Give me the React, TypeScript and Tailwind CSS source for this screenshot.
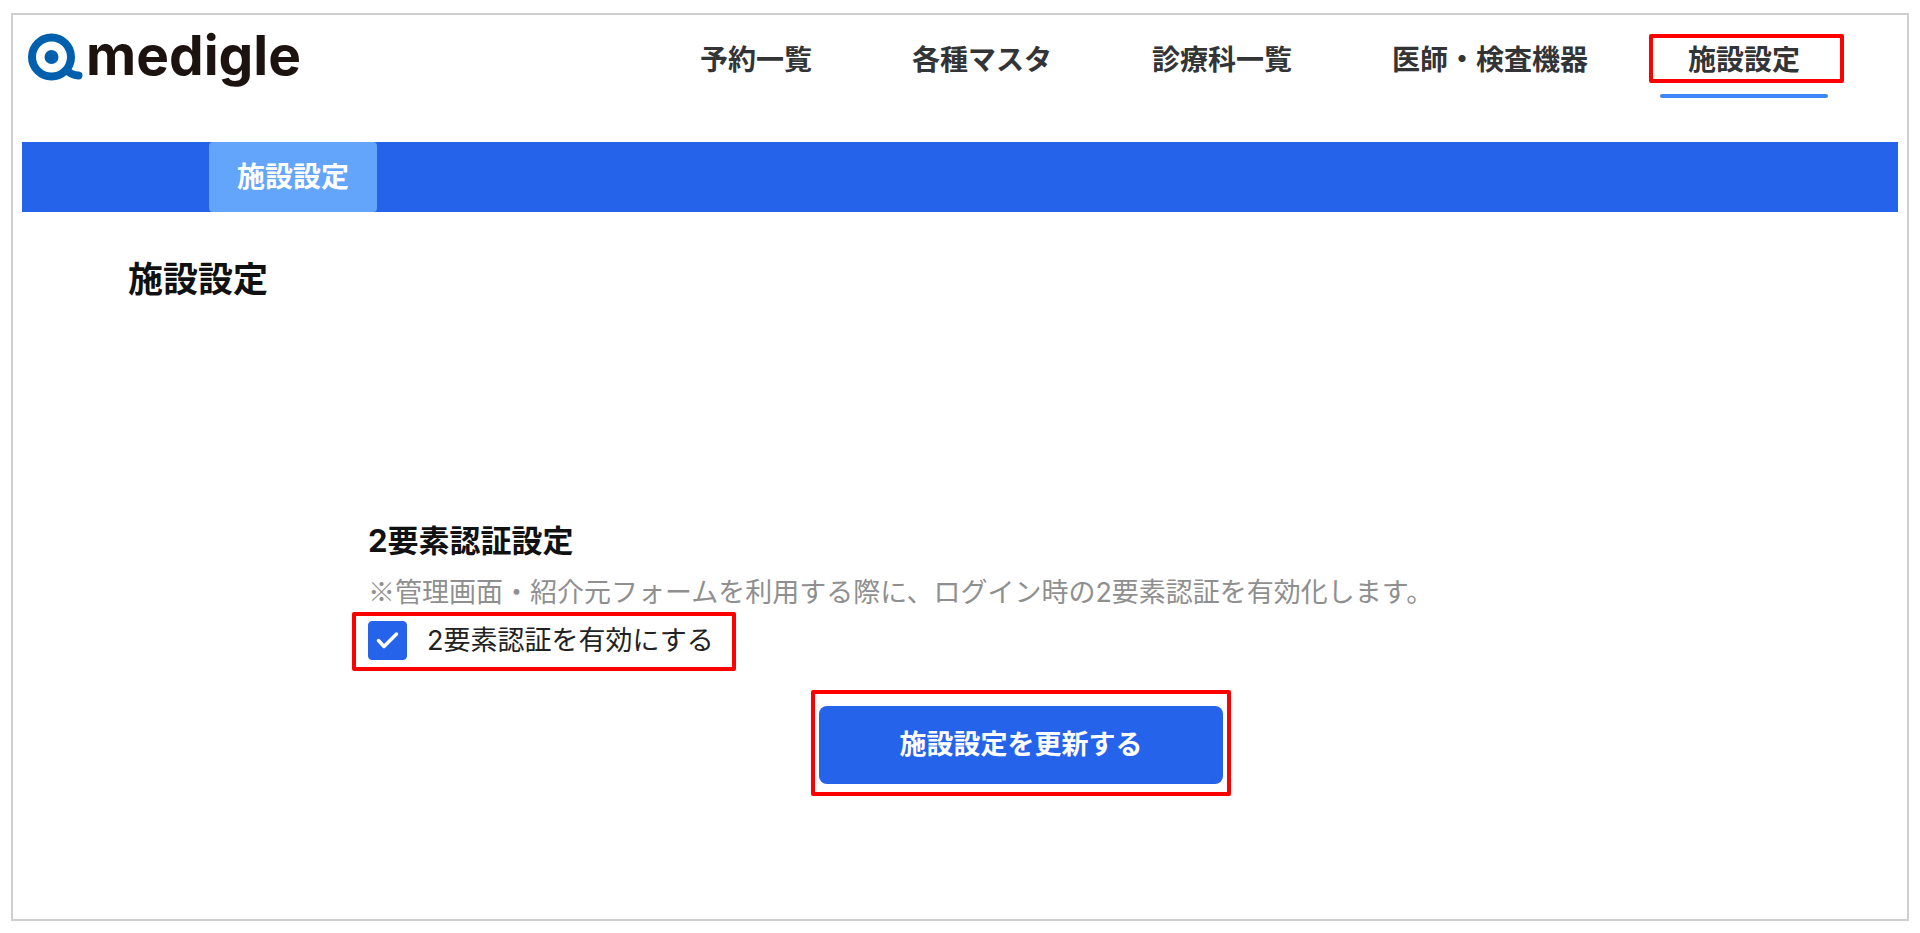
import { useState } from "react";

const navItems = [
  { label: "予約一覧", href: "#reservations" },
  { label: "各種マスタ", href: "#masters" },
  { label: "診療科一覧", href: "#departments" },
  { label: "医師・検査機器", href: "#doctors" },
  { label: "施設設定", href: "#facility", active: true },
];

function Logo() {
  return (
    <a href="#home" className="flex items-start">
      <svg className="mt-[5px] h-12 w-[55px] shrink-0" viewBox="0 0 55 48" fill="none" aria-hidden="true">
        <circle cx="23.5" cy="24" r="19.5" stroke="#0060ae" strokeWidth="8" />
        <circle cx="23.5" cy="24" r="7" fill="#0060ae" />
        <path d="M39 37.500C42 41 45 42 50.500 42.500" stroke="#0060ae" strokeWidth="8" strokeLinecap="round" />
      </svg>
      <span className="ml-[3px] font-['Inter',sans-serif] text-[55px] leading-[54px] font-bold text-[#1c1311]">
        medigle
      </span>
    </a>
  );
}

function Header() {
  return (
    <header className="flex items-start justify-between pt-[13px] pr-[79px] pb-[44px] pl-[15px]">
      <Logo />
      <nav className="flex gap-[44px] pt-3">
        {navItems.map((item) => (
          <a
            key={item.href}
            href={item.href}
            className="relative flex flex-col text-[28px] leading-10 font-bold whitespace-nowrap text-[#333436]"
          >
            <span className="px-7">{item.label}</span>
            {item.active && (
              <>
                <span className="mt-3.5 h-1 rounded-full bg-[#3f86f6]" />
                {/* Highlight frame */}
                <span className="absolute -top-1.5 -right-4 -left-[11px] h-[49px] rounded-xs border-4 border-[#ff0000]" />
              </>
            )}
          </a>
        ))}
      </nav>
    </header>
  );
}

export default function App() {
  const [enabled, setEnabled] = useState(true);

  return (
    <div
      lang="ja"
      className="flex min-h-screen flex-col bg-white px-[11px] pt-[13px] pb-3 font-['Inter','Noto_Sans_CJK_JP',sans-serif] text-[#111111]"
    >
      <div className="flex-1 border-2 border-[#cfcfcf]">
        <Header />

        {/* Sub navigation */}
        <nav className="mx-[9px] flex bg-[#2563eb] pl-[187px]">
          <a
            href="#facility"
            className="rounded-sm bg-[#62a5fb] px-7 text-[28px] leading-[70px] font-bold text-white"
          >
            施設設定
          </a>
        </nav>

        <main>
          <h1 className="mt-[47px] pl-[115px] text-[35px] leading-10 font-bold">施設設定</h1>

          <form
            className="mt-[222px] flex flex-col pr-[233px] pl-[355px]"
            onSubmit={(e) => e.preventDefault()}
          >
            <h2 className="text-[31px] leading-10 font-bold">2要素認証設定</h2>
            <p className="mt-3 text-[27px] leading-[39px] text-[#8f8f8f]">
              <span className="font-['Noto_Sans_CJK_JP',sans-serif] leading-none">※</span>
              管理画面・紹介元フォームを利用する際に、ログイン時の2要素認証を有効化します。
            </p>

            <div className="-ml-4 flex self-start rounded-xs border-4 border-[#ff0000] pt-[5px] pr-[18px] pb-[7px] pl-3">
              <span className="relative flex">
                <input
                  id="two-factor"
                  type="checkbox"
                  checked={enabled}
                  onChange={(e) => setEnabled(e.target.checked)}
                  className="size-[39px] appearance-none rounded-sm border border-[#2563eb] checked:bg-[#2563eb]"
                />
                {enabled && (
                  <svg
                    className="pointer-events-none absolute inset-0 size-full"
                    viewBox="0 0 39 39"
                    fill="none"
                    stroke="white"
                    strokeWidth="3.500"
                    strokeLinecap="round"
                    strokeLinejoin="round"
                  >
                    <path d="M10.500 19.500l5.500 6L28.500 13" />
                  </svg>
                )}
              </span>
              <label htmlFor="two-factor" className="pl-5 text-[27px] leading-[39px] text-[#222222]">
                2要素認証を有効にする
              </label>
            </div>

            <div className="mt-[19px] self-center rounded-xs border-4 border-[#ff0000] px-1 pt-3 pb-2">
              <button
                type="submit"
                className="block h-[78px] w-[404px] cursor-pointer rounded-lg bg-[#2563eb] text-[27px] font-bold text-white"
              >
                施設設定を更新する
              </button>
            </div>
          </form>
        </main>
      </div>
    </div>
  );
}
